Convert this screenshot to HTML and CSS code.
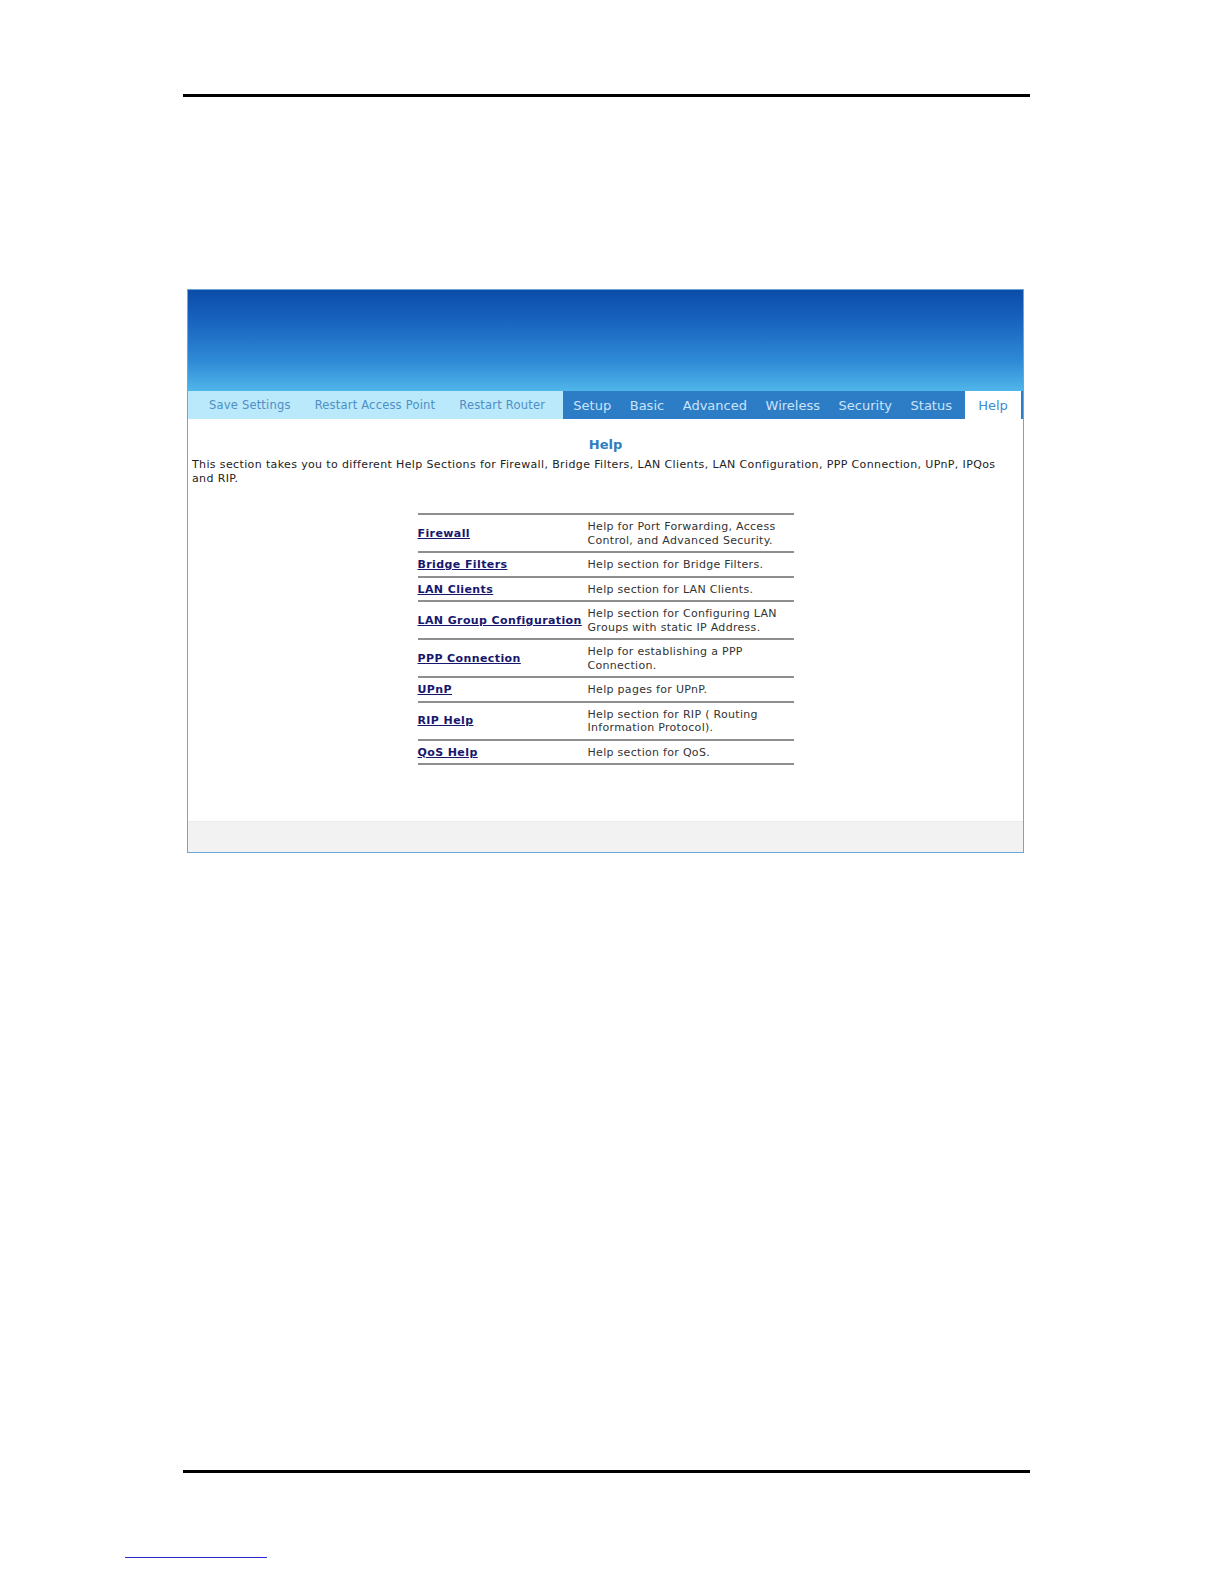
FILE: index.html
```html
<!DOCTYPE html>
<html>
<head>
<meta charset="utf-8">
<link rel="stylesheet" href="styles.css">
</head>
<body>
<div class="page">
  <div class="rule"></div>
  <div class="frame">
    <div class="banner"></div>
    <div class="nav">
      <div class="nav-light">
        <span class="nl">Save Settings</span>
        <span class="nl">Restart Access Point</span>
        <span class="nl">Restart Router</span>
      </div>
      <div class="nav-dark">
        <span class="nd">Setup</span>
        <span class="nd">Basic</span>
        <span class="nd">Advanced</span>
        <span class="nd">Wireless</span>
        <span class="nd">Security</span>
        <span class="nd">Status</span>
      </div>
      <div class="nav-active">Help</div>
      <div class="nav-end"></div>
    </div>
    <div class="content">
      <div class="title">Help</div>
      <p class="intro">This section takes you to different Help Sections for Firewall, Bridge Filters, LAN Clients, LAN Configuration, PPP Connection, UPnP, IPQos and RIP.</p>
      <table class="help-table">
        <tr><td class="lk"><a href="#">Firewall</a></td><td class="ds">Help for Port Forwarding, Access Control, and Advanced Security.</td></tr>
        <tr><td class="lk"><a href="#">Bridge Filters</a></td><td class="ds">Help section for Bridge Filters.</td></tr>
        <tr><td class="lk"><a href="#">LAN Clients</a></td><td class="ds">Help section for LAN Clients.</td></tr>
        <tr><td class="lk"><a href="#">LAN Group Configuration</a></td><td class="ds">Help section for Configuring LAN Groups with static IP Address.</td></tr>
        <tr><td class="lk"><a href="#">PPP Connection</a></td><td class="ds">Help for establishing a PPP Connection.</td></tr>
        <tr><td class="lk"><a href="#">UPnP</a></td><td class="ds">Help pages for UPnP.</td></tr>
        <tr><td class="lk"><a href="#">RIP Help</a></td><td class="ds">Help section for RIP ( Routing Information Protocol).</td></tr>
        <tr><td class="lk"><a href="#">QoS Help</a></td><td class="ds">Help section for QoS.</td></tr>
      </table>
    </div>
    <div class="footer"></div>
  </div>
  <div class="rule bottom"></div>
</div>
<div class="foot-link"></div>
</body>
</html>
```

FILE: styles.css
```css
html, body {
  margin: 0;
  padding: 0;
  background: #ffffff;
}
body {
  font-family: "DejaVu Sans", Verdana, sans-serif;
}
.page {
  margin-left: 183px;
  width: 847px;
  padding-top: 94px;
}
.rule {
  height: 3px;
  background: #000;
}
.rule.bottom {
  margin-top: 617px;
}
.frame {
  margin-top: 192px;
  margin-left: 4px;
  width: 835px;
  border: 1px solid #6aa6d6;
  background: #fff;
}
.banner {
  height: 101px;
  background: linear-gradient(to bottom, #0b4ca9 0%, #1a67c2 35%, #2f8ad6 70%, #4fb6ea 100%);
}
.nav {
  display: flex;
  height: 28px;
  align-items: stretch;
}
.nav-light {
  width: 375px;
  background: #b9e9fb;
  display: flex;
  align-items: center;
  padding-left: 9px;
  box-sizing: border-box;
}
.nl {
  font-size: 11.5px;
  color: #4f8fc4;
  padding: 0 12px;
  letter-spacing: 0.2px;
  white-space: nowrap;
}
.nav-dark {
  width: 402px;
  background: #2d7cc6;
  display: flex;
  align-items: center;
  padding-left: 1px;
  box-sizing: border-box;
}
.nd {
  font-size: 13px;
  color: #cae4fb;
  padding: 0 9.3px;
  white-space: nowrap;
}
.nav-active {
  width: 56px;
  background: #ffffff;
  color: #3a8bd2;
  font-size: 13px;
  display: flex;
  align-items: center;
  justify-content: center;
}
.nav-end {
  flex: 1;
  background: #2d7cc6;
}
.content {
  height: 402px;
  padding: 0 4px;
  box-sizing: border-box;
  overflow: hidden;
}
.title {
  text-align: center;
  font-size: 13px;
  font-weight: bold;
  color: #2c7ec0;
  padding-top: 18px;
  line-height: 16px;
}
.intro {
  margin: 5px 0 0 0;
  font-size: 11px;
  letter-spacing: 0.37px;
  line-height: 14px;
  color: #222;
}
.help-table {
  margin: 27px auto 0 auto;
  width: 376px;
  border-collapse: collapse;
  border-top: 2px solid #8e8e8e;
  font-size: 11px;
  line-height: 13.5px;
}
.help-table td {
  border-bottom: 2px solid #8e8e8e;
  padding: 5px 0 4px 0;
  vertical-align: middle;
}
.help-table td.lk {
  width: 170px;
  white-space: nowrap;
}
.help-table td.ds {
  color: #333;
  padding-left: 0;
  letter-spacing: 0.3px;
}
.help-table a {
  color: #17176e;
  font-weight: bold;
  letter-spacing: 0.4px;
  text-decoration: underline;
}
.footer {
  height: 31px;
  background: #f2f2f2;
  border-top: 1px solid #ececec;
  box-sizing: border-box;
}
.foot-link {
  margin-left: 125px;
  margin-top: 84px;
  width: 142px;
  height: 1px;
  background: #2a2ad0;
}
```
